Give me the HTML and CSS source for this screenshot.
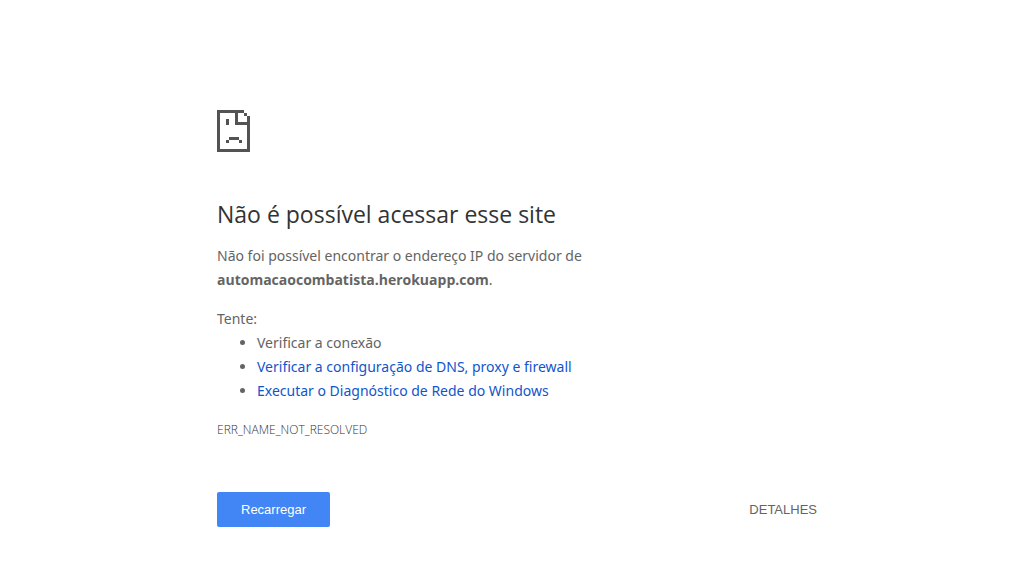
FILE: index.html
```html
<!DOCTYPE html>
<html lang="pt-BR">
<head>
<meta charset="utf-8">
<meta name="viewport" content="width=device-width, initial-scale=1">
<title>automacaocombatista.herokuapp.com</title>
<link rel="stylesheet" href="styles.css">
</head>
<body>
<main class="error-page">
  <svg class="error-icon" viewBox="0 0 33 42" shape-rendering="crispEdges" aria-hidden="true">
    <path fill="#535353" fill-rule="evenodd" d="M0 0H27V3H21V12H30V6H33V42H0ZM3 3V39H30V15H18V3ZM27 3H30V6H27ZM9 9H12V15H9ZM12 27H22V30H12ZM9 30H12V33H9ZM22 30H25V33H22Z"/>
  </svg>
  <h1 class="title">Não é possível acessar esse site</h1>
  <p class="summary">Não foi possível encontrar o endereço IP do servidor de <strong class="host">automacaocombatista.herokuapp.com</strong>.</p>
  <section class="suggestions">
    <p class="suggestions-label">Tente:</p>
    <ul class="suggestions-list">
      <li>Verificar a conexão</li>
      <li><a class="link" href="#dns">Verificar a configuração de DNS, proxy e firewall</a></li>
      <li><a class="link" href="#rede">Executar o Diagnóstico de Rede do Windows</a></li>
    </ul>
  </section>
  <p class="error-code">ERR_NAME_NOT_RESOLVED</p>
  <div class="actions">
    <button class="button button-primary" type="button">Recarregar</button>
    <button class="button button-text" type="button">DETALHES</button>
  </div>
</main>
</body>
</html>
```
FILE: styles.css
```css
body {
  margin: 0;
  background: #fff;
  color: #646464;
  font-family: "Segoe UI", "Noto Sans", "Open Sans", sans-serif;
  font-size: 14px;
  line-height: 24px;
}

.error-page {
  box-sizing: border-box;
  max-width: 600px;
  margin: 0 auto;
  padding-top: 110px;
}

.error-icon {
  display: block;
  width: 33px;
  height: 42px;
}

.title {
  margin: 47px 0 15px;
  color: #333;
  font-family: "Segoe UI", "Open Sans", sans-serif;
  font-size: 23px;
  font-weight: 400;
  line-height: 30px;
}

.summary {
  max-width: 400px;
  margin: 0 0 15px;
}

.host {
  font-family: "Segoe UI", "Open Sans", sans-serif;
}

.suggestions-label {
  margin: 0;
}

.suggestions-list {
  margin: 0;
  padding-left: 40px;
}

.link {
  color: #1155cc;
  text-decoration: none;
}

.error-code {
  margin: 15px 0 0;
  color: #333;
  font-family: "Segoe UI", "Open Sans", sans-serif;
  font-size: 12px;
  font-weight: 300;
}

.actions {
  display: flex;
  justify-content: space-between;
  align-items: center;
  margin-top: 50px;
}

.button {
  border: 0;
  border-radius: 2px;
  font-family: "Liberation Sans", Arial, sans-serif;
  font-size: 13px;
  line-height: 15px;
  cursor: pointer;
}

.button-primary {
  padding: 10px 24px;
  background: #4285f4;
  color: #fff;
}

.button-text {
  padding: 10px 0;
  background: none;
  color: #646464;
}
```
